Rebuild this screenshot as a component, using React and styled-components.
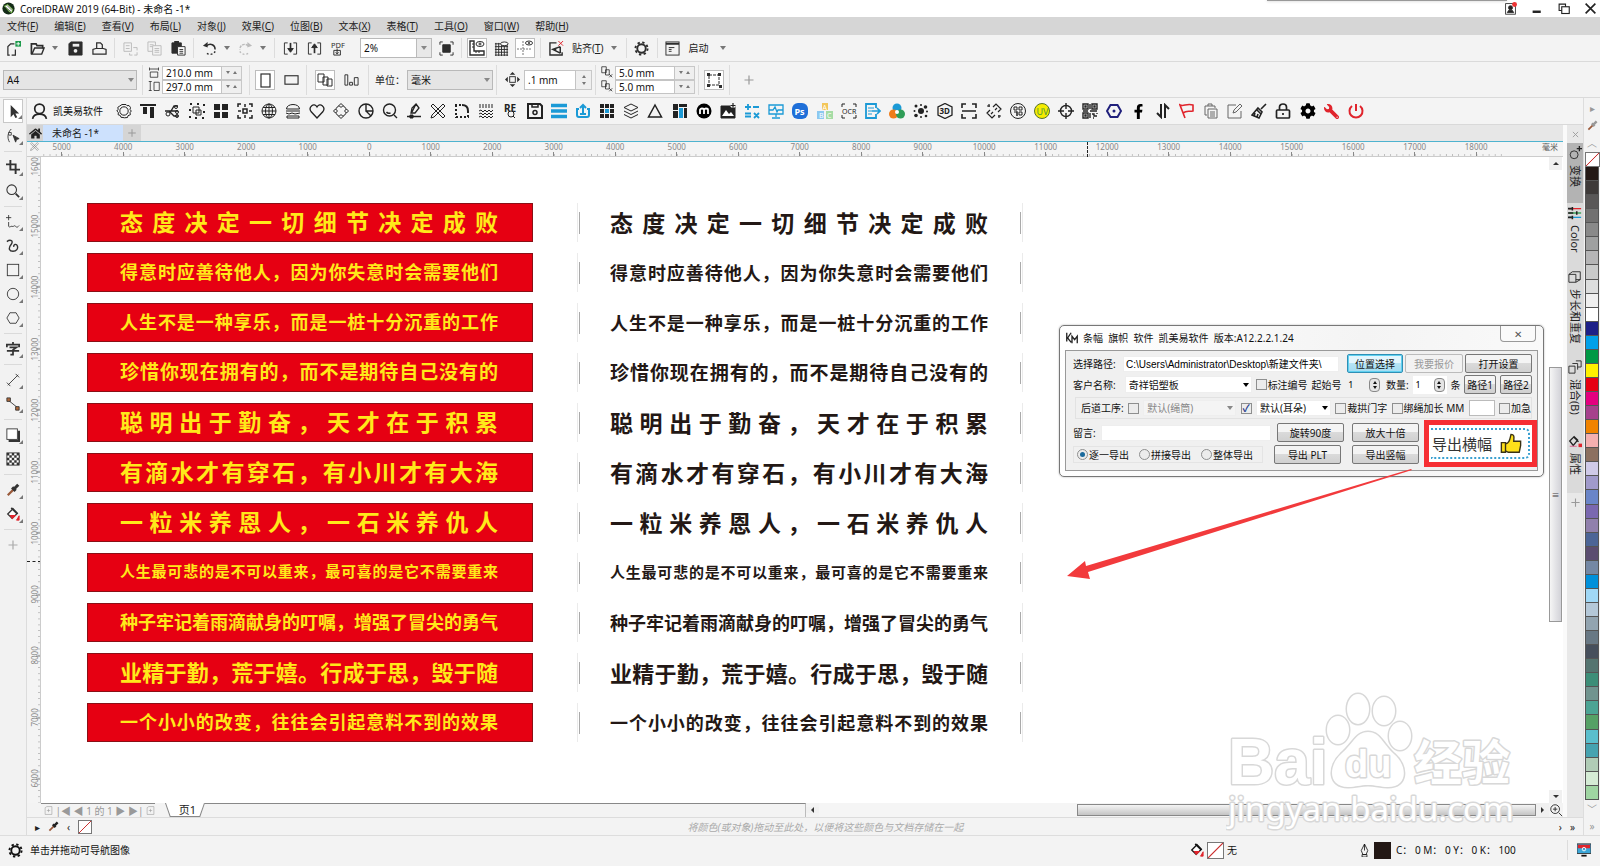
import React, { useState } from 'react';
import styled, { createGlobalStyle, css } from 'styled-components';
import { FaFacebookF, FaWrench, FaCog, FaHome } from 'react-icons/fa';

const GlobalStyle = createGlobalStyle`
  * {
    box-sizing: border-box;
  }

  body {
    margin: 0;
    overflow: hidden;
    background: #f2f2f2;
    color: #222;
  }

  body, button, input, select {
    font-family: "Noto Sans", "Noto Sans CJK SC", sans-serif;
    font-size: 10px;
    line-height: 14px;
  }

  svg {
    display: block;
    flex: none;
  }
`;

const Page = styled.div`
  display: flex;
  flex-direction: column;
  height: 100vh;
`;

/* title and menu */

const TitleBar = styled.header`
  position: relative;
  display: flex;
  align-items: center;
  gap: 5px;
  height: 17px;
  padding: 0 3px 0 2px;
  background: #fff;
`;

const TopEdge = styled.div`
  position: absolute;
  top: 0;
  right: 93px;
  width: 240px;
  height: 1px;
  background: #999;
  box-shadow: 0 0 3px #aaa;
`;

const Title = styled.h1`
  flex: 1;
  margin: 0;
  font-size: 10px;
  font-weight: 400;
  color: #111;
`;

const WindowButtons = styled.div`
  display: flex;
  gap: 14px;
`;

const PlainButton = styled.button`
  display: flex;
  align-items: center;
  justify-content: center;
  padding: 0;
  border: 0;
  background: none;
  color: ${(p) => p.$color || '#222'};
`;

const MenuBar = styled.nav`
  display: flex;
  gap: 16px;
  height: 18px;
  padding: 0 7px;
  background: #d6d6d6;
`;

const ToolRow = styled.div`
  display: flex;
  align-items: center;
  height: ${(p) => p.$height}px;
  padding-left: ${(p) => p.$left || 1}px;
  border-bottom: 1px solid #dadada;
  background: #f3f3f3;
`;

const ToolButton = styled.button`
  display: flex;
  align-items: center;
  justify-content: center;
  width: ${(p) => (p.$active ? 20 : 24)}px;
  height: 20px;
  margin: 0 ${(p) => (p.$active ? 2 : 0)}px;
  padding: 0;
  border: ${(p) => (p.$active ? '1px solid #bdbdbd' : 0)};
  background: ${(p) => (p.$active ? '#fff' : 'none')};
  color: ${(p) => (p.$dim ? '#bbb' : '#2d2d2d')};
`;

const TextButton = styled(PlainButton)`
  padding: 0 4px;
`;

const Sep = styled.span`
  width: 1px;
  height: ${(p) => p.$height || 20}px;
  margin: 0 3px;
  background: #dcdcdc;
`;

const Space = styled.span`
  width: ${(p) => p.$w}px;
`;

const Caret = styled.span`
  width: 0;
  height: 0;
  margin: 0 3px;
  border: 3px solid transparent;
  border-top: 4px solid #777;
  border-bottom: 0;
`;

const SelectWrap = styled.span`
  display: grid;
  align-items: center;
  width: ${(p) => p.$w}px;
  height: ${(p) => p.$h || 20}px;

  select {
    grid-area: 1 / 1;
    width: 100%;
    height: 100%;
    padding: 0 3px;
    border: ${(p) => (p.$flat ? '1px solid #eee' : '1px solid #b9b9b9')};
    border-radius: 0;
    appearance: none;
    background: ${(p) => p.$bg || '#e5e5e5'};
    color: ${(p) => (p.$dim ? '#888' : '#111')};
    opacity: 1;
  }

  ${Caret} {
    grid-area: 1 / 1;
    justify-self: end;
    border-top-color: ${(p) => (p.$flat && !p.$dim ? '#000' : '#888')};
    pointer-events: none;
  }
`;

const BoxedSelect = styled(SelectWrap)`
  select {
    background: linear-gradient(90deg, #fff calc(100% - 15px), #bbb calc(100% - 15px), #bbb calc(100% - 14px), #e8e8e8 calc(100% - 14px));
  }

  ${Caret} {
    margin: 0 5px;
  }
`;

const Pair = styled.div`
  display: grid;
  grid-template-columns: 14px 60px 20px;
  grid-template-rows: 14px 14px;
`;

const SizeInput = styled.input`
  width: 100%;
  min-width: 0;
  height: 14px;
  padding: 0 3px;
  border: 1px solid #c4c4c4;
  background: #fff;
  color: #111;
`;

const NudgeInput = styled(SizeInput)`
  width: 52px;
  height: 20px;
`;

const Stepper = styled.span`
  display: flex;
  flex-direction: ${(p) => (p.$stack ? 'column' : 'row')};
  align-items: center;
  justify-content: space-evenly;
  width: ${(p) => (p.$stack ? 16 : 20)}px;
  height: ${(p) => (p.$stack ? 20 : 14)}px;
  border: 1px solid #c8c8c8;
  border-left: 0;
  background: #efefef;

  i {
    border: 2px solid transparent;
    border-bottom: 3px solid #777;
    border-top: 0;
  }

  i.down {
    border-top: 3px solid #777;
    border-bottom: 0;
  }
`;

/* body */

const Body = styled.div`
  display: flex;
  flex: 1;
  min-height: 0;
`;

const ToolBox = styled.aside`
  display: flex;
  flex-direction: column;
  align-items: center;
  width: 27px;
  padding-top: 1px;
  border-right: 1px solid #dcdcdc;
  background: #f2f2f2;

  hr {
    width: 18px;
    margin: 3px 0;
    border: 0;
    border-top: 1px solid #dadada;
  }
`;

const ToolBoxButton = styled.button`
  position: relative;
  display: flex;
  align-items: center;
  justify-content: center;
  width: 20px;
  height: 24px;
  padding: 0;
  border: 0;
  background: none;
  color: ${(p) => (p.$dim ? '#aaa' : '#333')};

  ${(p) =>
    p.$active &&
    css`
      margin-bottom: 1px;
      border: 1px solid #c8c8c8;
      background: #fff;
    `}

  &::after {
    content: "";
    position: absolute;
    right: 0;
    bottom: 3px;
    border: 2px solid transparent;
    border-right-color: ${(p) => (p.$plain ? 'transparent' : '#777')};
    border-bottom-color: ${(p) => (p.$plain ? 'transparent' : '#777')};
  }
`;

const Main = styled.main`
  display: flex;
  flex: 1;
  flex-direction: column;
  min-width: 0;
`;

const PluginBar = styled.div`
  display: flex;
  align-items: center;
  height: 27px;
  padding-left: 4px;
  border-bottom: 1px solid #d9d9d9;
  background: #f4f4f4;
`;

const PluginName = styled.span`
  width: 59px;
  color: #111;
`;

const PluginIcons = styled.div`
  display: grid;
  flex: 0 1 1256px;
  grid-template-columns: repeat(52, 1fr);
`;

const Work = styled.div`
  display: flex;
  flex: 1;
  min-height: 0;
`;

const DocWindow = styled.section`
  display: flex;
  flex: 1;
  flex-direction: column;
  min-width: 0;
  background: #fff;
`;

const TabStrip = styled.div`
  display: flex;
  height: 17px;
  border-bottom: 1px solid #4fb3cf;
  background: #e7e7e7;
`;

const HomeTab = styled(PlainButton)`
  width: 16px;
  background: #d3d3d3;
`;

const DocTab = styled(PlainButton)`
  justify-content: flex-start;
  width: 80px;
  padding-left: 9px;
  background: #cde1fd;
`;

const NewTab = styled(PlainButton)`
  width: 18px;
  background: #d5d5d5;
  color: #999;
`;

const TopRuler = styled.div`
  position: relative;
  display: flex;
  height: 15px;
  padding-left: 4px;
  border-bottom: 1px solid #ccc;
  background: #f4f4f4;
`;

const rulerText = css`
  font-size: 8px;
  line-height: 10px;
  color: #888;
  text-align: center;
`;

const HCell = styled.span`
  flex: 1;
  ${rulerText}
  background:
    linear-gradient(#888, #888) 50% 100% / 1px 4px no-repeat,
    linear-gradient(90deg, #bbb 1px, transparent 1px) 0 100% / 10% 2px repeat-x;
`;

const Unit = styled.span`
  width: 56px;
  padding-left: 30px;
  ${rulerText}
  color: #555;
`;

const Corner = styled.span`
  position: absolute;
  left: 0;
  top: 0;
  display: flex;
  justify-content: center;
  width: 14px;
  height: 14px;
  background: #f4f4f4;
  color: #777;
`;

const HCursor = styled.i`
  position: absolute;
  left: 1060px;
  top: 0;
  height: 15px;
  border-left: 1px dashed #222;
`;

const View = styled.div`
  position: relative;
  display: flex;
  flex: 1;
  min-height: 0;
`;

const SideRuler = styled.div`
  position: relative;
  width: 14px;
  overflow: hidden;
  border-right: 1px solid #ccc;
  background: #f4f4f4;
`;

const SideScale = styled.div`
  display: grid;
  grid-auto-rows: 1fr;
  height: calc(100% + 31px);
  margin-top: -24px;
`;

const VCell = styled.span`
  writing-mode: vertical-rl;
  transform: rotate(180deg);
  ${rulerText}
  padding-right: 3px;
  background:
    linear-gradient(#888, #888) 0 50% / 4px 1px no-repeat,
    linear-gradient(#bbb 1px, transparent 1px) 0 0 / 2px 10% repeat-y;
`;

const VCursor = styled.i`
  position: absolute;
  left: 0;
  top: 404px;
  width: 14px;
  border-top: 1px dashed #222;
`;

const Canvas = styled.div`
  display: flex;
  flex: 1;
  gap: 44px;
  min-width: 0;
  padding: 46px 0 0 46px;
  overflow: hidden;
`;

const BannerColumn = styled.div`
  display: flex;
  flex: 0 1 445px;
  flex-direction: column;
  gap: 11px;
`;

const Banner = styled.p`
  display: flex;
  align-items: center;
  height: 39px;
  margin: 0;
  padding: 0 34px 4px 32px;
  border: 1px solid #8a1016;
  background: #e60012;
  color: #ffe91a;

  span {
    flex: 1;
    font-family: "Noto Sans CJK SC", sans-serif;
    font-size: ${(p) => p.$size}px;
    font-weight: 700;
    line-height: 30px;
    text-align-last: justify;
    white-space: nowrap;
  }
`;

const PrintLine = styled(Banner)`
  padding-bottom: 2px;
  border: solid #ebebeb;
  border-width: 0 1px;
  background:
    linear-gradient(#aaa, #aaa) 1px 50% / 1px 22px no-repeat,
    linear-gradient(#aaa, #aaa) calc(100% - 1px) 50% / 1px 22px no-repeat;
  color: #231815;
`;

const VScroll = styled.div`
  display: grid;
  grid-template-rows: 13px 197fr 255fr 168fr 13px;
  width: 14px;
  padding-right: 1px;
`;

const ScrollButton = styled(PlainButton)`
  width: 13px;
  background: #f0f0f0;

  &::before {
    content: "";
    border: 3px solid transparent;
    border-${(p) => p.$side}: 3px solid #333;
    border-${(p) => p.$away}: 0;
  }
`;

const VThumb = styled.div`
  display: flex;
  align-items: center;
  justify-content: center;
  border: 1px solid #999;
  background: linear-gradient(90deg, #f5f5f5, #d2d2d8);
  color: #444;
  font-size: 8px;
`;

const PageNav = styled.div`
  display: flex;
  align-items: center;
  height: 14px;
  padding-left: 14px;
  background: #f3f3f3;
  color: #999;
`;

const NavButtons = styled.div`
  display: flex;
  align-items: center;
  justify-content: space-between;
  width: 114px;
  height: 14px;
  padding-left: 3px;
  border-top: 1px solid #888;
`;

const PageTab = styled.button`
  position: relative;
  width: 40px;
  height: 14px;
  margin-left: 10px;
  padding: 0 0 0 5px;
  border: 0;
  background: #888;
  clip-path: polygon(0 0, 100% 0, 88% 100%, 12% 100%);
  color: #222;
  font-size: 11px;
  line-height: 12px;

  &::before {
    content: "";
    position: absolute;
    inset: 0 1px 1px;
    background: #fff;
    clip-path: polygon(0 0, 100% 0, 88% 100%, 12% 100%);
  }

  span {
    position: relative;
  }
`;

const NavFill = styled.div`
  flex: 600;
  align-self: stretch;
  border-top: 1px solid #888;
  border-right: 1px solid #bbb;
`;

const HTrack = styled.div`
  flex: 730;
  display: flex;
  align-self: stretch;
  background: #f5f5f5;
`;

const TrackGap = styled.span`
  flex: 258;
`;

const HThumb = styled.div`
  flex: 457;
  height: 12px;
  margin-top: 1px;
  border: 1px solid #888;
  background: linear-gradient(#f4f4f4, #c4c4c4);
`;

const Docker = styled.aside`
  display: flex;
  flex-direction: column;
  width: 20px;
  border-left: 4px solid #fafafa;
  background: #e8e8e8;
`;

const DockerTab = styled.button`
  display: flex;
  align-items: center;
  gap: 5px;
  height: ${(p) => p.$h}px;
  padding: 3px 0;
  border: 0;
  background: ${(p) => (p.$active ? '#b3b3b3' : '#dadada')};
  color: #222;
  font-size: 11px;
  writing-mode: vertical-rl;
  text-orientation: sideways;
  white-space: nowrap;
`;

const DockerButton = styled(PlainButton)`
  height: 18px;
  color: #999;
`;

const DocPalette = styled.div`
  display: flex;
  align-items: center;
  gap: 8px;
  height: 18px;
  padding: 0 8px;
  border-top: 1px solid #dcdcdc;
  background: #f3f3f3;

  em {
    flex: 1;
    color: #aaa;
    text-align: center;
  }
`;

const Palette = styled.aside`
  display: flex;
  flex-direction: column;
  width: 17px;
  padding: 0 1px;
  border-left: 1px solid #ddd;
  background: #f3f3f3;
`;

const PaletteTools = styled.div`
  display: flex;
  flex-direction: column;
  align-items: center;
  justify-content: space-around;
  height: ${(p) => p.$h}px;
  color: #999;
`;

const Swatch = styled.button`
  flex: 1;
  min-height: 0;
  padding: 0;
  border: 1px solid #555;
  border-top-width: 0;
  background: ${(p) => p.$color};
`;

const NoColor = styled.span`
  display: block;
  flex: none;
  width: ${(p) => p.$size}px;
  height: ${(p) => p.$size}px;
  border: 1px solid #777;
  background: linear-gradient(to bottom right, #fff 46%, #c33 48%, #c33 52%, #fff 54%);
`;

const StatusBar = styled.footer`
  display: flex;
  align-items: center;
  height: 31px;
  padding: 0 9px 2px 8px;
  border-top: 1px solid #ddd;
  background: #f3f3f3;
  color: #111;
`;

const StatusText = styled.span`
  flex: 1;
  padding-left: 7px;
`;

const StatusItem = styled.div`
  display: flex;
  align-items: center;
  gap: 3px;
  width: ${(p) => p.$w}px;
`;

const Ink = styled.span`
  width: 17px;
  height: 17px;
  margin-right: 2px;
  background: #231815;
`;

/* export dialog */

const Dialog = styled.section`
  position: absolute;
  top: 168px;
  right: 19px;
  width: 485px;
  padding: 0 5px 5px;
  border: 1px solid #777;
  border-radius: 5px;
  background: linear-gradient(100deg, #fff, #f4f4f4 60%, #fafafa);
  box-shadow: 0 0 2px #aaa;
  color: #111;

  input, select, button {
    font-size: 10px;
  }
`;

const DialogHead = styled.div`
  display: flex;
  height: 24px;
  gap: 4px;

  h2 {
    flex: 1;
    margin: 0;
    font-size: 10px;
    font-weight: 400;
    line-height: 24px;
    white-space: pre;
  }
`;

const DialogClose = styled.button`
  width: 36px;
  height: 16px;
  margin-right: 2px;
  padding: 0;
  border: 1px solid #999;
  border-top: 0;
  border-radius: 0 0 4px 4px;
  background: #fafafa;
  color: #555;
`;

const DialogBody = styled.div`
  display: flex;
  flex-direction: column;
  padding: 2px 0 3px;
  border: 1px solid #999;
  background: #f0f0f0;
`;

const FormRow = styled.div`
  display: flex;
  align-items: center;
  justify-content: space-between;
  gap: 2px;
  height: 21px;
  padding: 0 5px 0 7px;
  white-space: nowrap;
`;

const FieldLabel = styled.label`
  width: ${(p) => p.$w}px;
`;

const Field = styled.input`
  flex: ${(p) => (p.$w ? 'none' : 1)};
  width: ${(p) => p.$w || 100}px;
  height: 16px;
  padding: 0 2px;
  border: 1px solid ${(p) => (p.$line ? '#bbb' : '#eee')};
  background: #fff;
  font-family: "Liberation Sans", "Noto Sans CJK SC", sans-serif;
`;

const Button = styled.button`
  width: ${(p) => p.$w}px;
  height: 19px;
  padding: 0;
  border: 1px solid #777;
  border-radius: 2px;
  background: linear-gradient(#f4f4f4 45%, #dadada 50%, #d0d0d0);
  color: #111;

  ${(p) =>
    p.$primary &&
    css`
      border-color: #2f8fb5;
      background: linear-gradient(#e2f5fd 45%, #b6e3f5 50%, #a2dcf2);
      box-shadow: inset 0 0 0 1px #5fd0f0;
    `}

  &:disabled {
    border-color: #bbb;
    background: #f2f2f2;
    color: #999;
  }
`;

const ProcessGroup = styled(FormRow)`
  height: 22px;
  margin: 2px 5px 1px 9px;
  padding: 0 0 0 5px;
  border: 1px solid #e2e2e2;
`;

const Check = styled.label`
  display: flex;
  align-items: center;
  gap: 1px;

  input {
    display: grid;
    place-content: center;
    width: 11px;
    height: 11px;
    margin: 0;
    border: 1px solid #8e8f8f;
    border-radius: ${(p) => (p.$round ? '50%' : 0)};
    appearance: none;
    background: #ececec;
  }

  input[type="checkbox"]:checked::before {
    content: "✓";
    color: #223a8c;
    font-size: 10px;
    font-weight: 700;
  }

  input[type="radio"]:checked::before {
    content: "";
    width: 5px;
    height: 5px;
    border-radius: 50%;
    background: #1b6a9c;
  }
`;

const Spin = styled.span`
  display: flex;
  align-items: center;
  width: ${(p) => p.$w}px;
  height: 18px;
  padding-right: 2px;
  background: ${(p) => p.$bg};

  input {
    flex: 1;
    width: 10px;
    padding: 0 0 0 3px;
    border: 0;
    background: none;
    font-size: 9px;
  }

  ${Stepper} {
    width: 11px;
    height: 14px;
    border: 1px solid #888;
    border-radius: 4px;
    background: #e4e4e4;
  }

  i {
    border-bottom-color: #111;
  }

  i.down {
    border-top-color: #111;
  }
`;

const DialogBottom = styled.div`
  display: flex;
`;

const BottomLeft = styled.div`
  display: flex;
  flex: 1;
  flex-direction: column;
  gap: 1px;
  padding-top: 2px;
`;

const RadioBox = styled.div`
  display: flex;
  align-items: center;
  justify-content: space-between;
  width: 190px;
  height: 17px;
  padding: 0 9px 0 3px;
  border: 1px solid #e4e4e4;
`;

const ExportButton = styled.button`
  width: 113px;
  height: 47px;
  padding: 0;
  border: 5px solid #f62e33;
  background: #fff;

  && {
    font-size: 15px;
  }

  span {
    display: flex;
    align-items: center;
    justify-content: space-between;
    height: 31px;
    margin: 2px;
    padding: 0 6px 0 1px;
    border: 2px dotted #3aa0d0;
    border-left: 0;
    border-radius: 0 5px 5px 0;
    white-space: nowrap;
    color: #333;
  }
`;

const Arrow = styled.svg`
  position: absolute;
  top: 308px;
  right: 150px;
`;

const Watermark = styled.svg`
  position: absolute;
  right: 42px;
  bottom: -35px;
  z-index: 1;
  pointer-events: none;
`;

/* icons, all on a 16 x 16 grid */

const BLUE = '#1b9ad6';
const RED = '#e0242c';

const shapes = {
  logo: <><circle cx="8" cy="8" r="7.5" fill="#142c18" stroke="none" /><path d="M3 5l4-2 6 6-1 4-3-1z" fill="#fff" stroke="#66b52c" /><path d="M4 6l7 6M6 4l6 6" stroke="#142c18" strokeWidth=".8" /></>,
  user: <><rect x="2" y="2" width="12" height="13" /><circle cx="8" cy="7" r="2.5" fill="currentColor" /><path d="M4 13h8l-2-3H6z" fill="currentColor" /><circle cx="13" cy="3" r="3" fill="#e33" stroke="none" /></>,
  min: <path d="M2 12h10" strokeWidth="3" />,
  restore: <><rect x="5" y="5" width="10" height="9" strokeWidth="1.5" /><path d="M5 10H1.500V1.500H10V5" strokeWidth="1.500" /></>,
  close: <path d="M2 2l12 12M14 2L2 14" strokeWidth="2" />,
  newDoc: <><path d="M9 3H5L2 6v9h2M6 15h4V9" strokeWidth="1.300" /><rect x="10" y="0" width="6" height="6" fill="#1b9a4a" stroke="none" /><path d="M13 1v4M11 3h4" stroke="#fff" /></>,
  open: <><path d="M1.500 14V3h5l1 2h6v3" strokeWidth="1.800" /><path d="M2 14L5 7.500h10L12.500 14z" strokeWidth="1.500" /></>,
  save: <><path d="M3 1h12v14H1V3z" fill="currentColor" /><path d="M5 3h7v3H5z" fill="#eee" stroke="none" /><circle cx="8" cy="10.500" r="2" fill="#eee" stroke="none" /></>,
  print: <><path d="M1 14V9l3-1h8l3 1v5zM5 8V2h4l2 2v4" strokeWidth="1.300" /></>,
  cut: <><path d="M1 2h8v9H1zM3 5h4M3 8h4" /><path d="M11 7h4v3M15 12v3h-3M10 15H7v-2" /></>,
  copy: <><path d="M1 1h8v10H1zM3 4h4M3 6h3" /><path d="M6 5h9v10H6z" fill="#f3f3f3" /><path d="M8 8h5M8 10h5M8 12h5" /></>,
  paste: <><path d="M1 2h10v11H1z" fill="currentColor" /><path d="M4 0h4v3H4z" fill="currentColor" /><path d="M7 6h8v9H7z" fill="#fff" /><path d="M9 9h4M9 11h4M9 13h4" /></>,
  undo: <><path d="M5 5c4-3 9-1 9 4" strokeWidth="1.500" /><path d="M14 11a6 6 0 0 1-10 1" strokeWidth="1.500" strokeDasharray="2 2" /><path d="M1 5l5-4v6z" fill="currentColor" stroke="none" /></>,
  redo: <><path d="M11 5C7 2 2 4 2 9" strokeWidth="1.500" strokeDasharray="3 1" /><path d="M2 11a6 6 0 0 0 10 1" strokeWidth="1.500" strokeDasharray="2 2" /><path d="M15 5l-5-4v6z" fill="currentColor" stroke="none" /></>,
  import: <><path d="M5 2H1.500v12H5M11 2h3.500v12H11" /><path d="M8 2v8" strokeWidth="1.800" /><path d="M5 8h6l-3 4z" fill="currentColor" /></>,
  export: <><path d="M5 2H1.500v12H5M11 2h3.500v12H11" /><path d="M8 13V6" strokeWidth="1.800" /><path d="M5 7h6L8 3z" fill="currentColor" /></>,
  pdf: <><text x="0" y="7" fontSize="8" fill="currentColor" stroke="none">PDF</text><path d="M3 10h7v5H3zM6.500 8v5M5 12l1.500 2L8 12" /></>,
  full: <><path d="M4 4h8v8H4z" fill="currentColor" /><path d="M1 4V1h3M12 1h3v3M15 12v3h-3M4 15H1v-3" /></>,
  rulers: <><path d="M1 1h4v10h10v4H1z" strokeWidth="1.400" /><path d="M3 4h2M3 7h2M7 13v-2M10 13v-2" /><ellipse cx="11" cy="4" rx="4" ry="2.500" /><circle cx="11" cy="4" r="1" /></>,
  grid: <><path d="M1 3h14M1 6h14M1 9h14M1 12h14M1 15h14M2 2v14M5 2v14M8 2v14M11 2v14M14 2v14" /><ellipse cx="11" cy="3" rx="4" ry="2" fill="#fff" /></>,
  guides: <><path d="M6 1v14M0 9h15" strokeDasharray="2 1" stroke="#777" /><ellipse cx="12" cy="3" rx="3.500" ry="2" /><circle cx="12" cy="3" r=".7" /></>,
  snap: <><path d="M8 2H1v13h13v-3" strokeWidth="1.500" /><path d="M12 6L4 9l8 4M7 8v3M12 6v7" strokeWidth="1.600" /><path d="M10 0l5 5M15 0l-5 5" stroke={RED} /></>,
  gear: <><circle cx="8" cy="8" r="4.500" strokeWidth="2" /><circle cx="8" cy="8" r="6.500" strokeWidth="2" strokeDasharray="2.500 2.600" /></>,
  launch: <><rect x="1" y="1" width="14" height="14" /><path d="M1 3h14" strokeWidth="2" /><path d="M4 7h6M4 9h3M4 11h3" /></>,
  portrait: <rect x="4" y="2" width="9" height="13" strokeWidth="1.200" />,
  landscape: <rect x="1" y="4" width="14" height="9" strokeWidth="1.200" />,
  pages: <><path d="M1 2h6v8H1zM6 5h5v8H6zM10 7h5v7h-5z" fill="#fff" /></>,
  bars: <path d="M1 3h3v11H1zM6 11h3v3H6zM11 6h4v8h-4z" />,
  nudge: <><rect x="5" y="5" width="6" height="6" /><path d="M8 0l3 3H5zM8 16l3-3H5zM0 8l3-3v6zM16 8l-3-3v6z" fill="currentColor" stroke="none" /></>,
  dup: <><path d="M1 1h6v8H1zM6 5h5v7H6z" /><path d="M11 11l4 4M15 11l-4 4" /></>,
  treat: <><rect x="3" y="3" width="10" height="10" strokeDasharray="3 1" /><path d="M1 1h3v3H1zM12 1h3v3h-3zM1 12h3v3H1zM13 13h3v3h-3z" fill="currentColor" stroke="none" /></>,
  width: <path d="M2 2v4M14 2v4M2 4h12M3 8h10v7H3z" />,
  height: <path d="M1 2h4M1 14h4M3 2v12M8 3h7v11H8z" />,
  plus: <path d="M8 2v12M2 8h12" strokeWidth="1.600" />,
  pick: <path d="M5 1v13l3-3 2 4 2-1-2-4h4z" fill="currentColor" stroke="none" />,
  shapeTool: <><path d="M6 0C2 4 1 10 4 15" /><path d="M3 4h3v3H3z" fill="#fff" /><path d="M8 7l7 4-3 1-1 3z" fill="currentColor" /></>,
  crop: <path d="M5 0v11h11M0 5h11v11" strokeWidth="2.200" />,
  zoom: <><circle cx="6.500" cy="6.500" r="5.500" strokeWidth="1.200" /><path d="M11 11l4 4" strokeWidth="2" /></>,
  freehand: <><path d="M3 0v6M0 3h6M3 8v5c2 2 2-1 4 0s2-2 4 0 3 0 4-1" /></>,
  artistic: <path d="M1 3c4-3 8-1 5 3-4 5-2 8 2 8s6-3 5-6-5-2-4 1" strokeWidth="1.600" />,
  rect: <rect x="1.500" y="1.500" width="13" height="13" />,
  ellipse: <circle cx="8" cy="8" r="6.500" />,
  polygon: <path d="M4.500 2h7L15 8l-3.500 6h-7L1 8z" />,
  text: <path d="M8 0v3M1 6V3h14v3M4 6h8L8 9v5.500H5M1 10h14" strokeWidth="2" />,
  dimension: <path d="M2 14L14 2M1 11l4 4M11 1l4 4" />,
  connector: <><path d="M3 4l10 8" /><path d="M1 1h4v4H1zM11 11h4v4h-4z" fill="#b06a3c" /></>,
  shadow: <><path d="M3 15h12V3" strokeWidth="3" /><rect x="1" y="1" width="12" height="12" fill="#fff" /></>,
  checker: <><rect x="1" y="1" width="14" height="14" fill="#fff" /><path d="M1 2.500h14M1 8h14M1 13.500h14" strokeDasharray="2.800 2.800" strokeWidth="2.800" /><path d="M3.800 5.200h12M3.800 10.800h12" strokeDasharray="2.800 2.800" strokeWidth="2.800" /></>,
  dropper: <><path d="M2 14l7-7" stroke="#9a5a3a" strokeWidth="2.500" /><path d="M7 5l4 4M10 6l4-4" strokeWidth="3.500" /></>,
  fill: <><path d="M2 8l6-6 5 5-6 6z" fill="#fff" strokeWidth="1.500" /><path d="M4 9h8l-5 5z" fill={RED} stroke="none" /><path d="M15 10v5h-3z" fill={RED} stroke={RED} /><path d="M6 1l7 7" strokeWidth="2" /></>,
  account: <><circle cx="8" cy="5.500" r="4.500" strokeWidth="1.600" /><path d="M1.500 15c1-6 12-6 13 0" strokeWidth="1.600" /></>,
  flower: <><circle cx="8" cy="8" r="4.200" /><path d="M6 1.500h4l1 1.200 2-.2 1.500 2-.5 2 1.300 1.500-1.300 1.700.4 2-2.400 1-.5 1.800-3 .3L7 14.500l-2-.2-.7-1.800-2.200-.8.3-2.200L.800 8l1.400-1.700-.4-2 2-1.300z" /></>,
  align: <><path d="M0 2h16" strokeWidth="2" /><path d="M3 4h4v7H3zM10 4h4v11h-4z" fill="currentColor" stroke="none" /></>,
  nodes: <><path d="M1 8h6l3-5h4M5 8l5 5h4M7 8h7" strokeWidth="1.300" /><circle cx="4" cy="11" r="2" /><circle cx="12" cy="4" r="1.500" /><circle cx="13" cy="9" r="1.500" /><circle cx="13" cy="13" r="1.500" /></>,
  group: <><path d="M1 1h14v14H1z" strokeDasharray="2 5" strokeWidth="2" /><path d="M4 4h6v6H4zM7 7h5v5H7z" /></>,
  four: <path d="M1 1h6v6H1zM9 1h6v6H9zM1 9h6v6H1zM9 9h6v6H9z" fill="currentColor" stroke="none" />,
  focus: <><path d="M1 4V1h3M12 1h3v3M15 12v3h-3M4 15H1v-3M8 1v3M8 12v3M1 8h3M12 8h3" strokeWidth="1.500" /><rect x="6" y="6" width="4" height="4" strokeWidth="1.500" /></>,
  globe: <><circle cx="8" cy="8" r="7" /><ellipse cx="8" cy="8" rx="3.500" ry="7" /><path d="M8 1v14M1 8h14M2 4.500h12M2 11.500h12" /></>,
  burger: <><path d="M1.500 6c0-6 13-6 13 0zM1 8h14M1 10l3 1 3-1 3 1 5-1M2 13h12v2H2z" /></>,
  heart: <path d="M8 15L2 8.500C-1 4 5-1 8 4c3-5 9 0 6 4.500z" strokeWidth="1.300" />,
  ring: <><circle cx="8" cy="8" r="5.500" /><path d="M8 .5L10 2.500 8 4.500 6 2.500zM8 11.500l2 2-2 2-2-2zM2.500 6l2 2-2 2-2-2zM13.500 6l2 2-2 2-2-2z" fill="#f4f4f4" /></>,
  pie: <><circle cx="8" cy="8" r="7" strokeWidth="1.400" /><path d="M8 1v7h7M8 8l5 5" strokeWidth="1.400" /></>,
  search: <><circle cx="7.500" cy="7" r="6" strokeWidth="1.400" /><path d="M12 12l3 3M4.500 9c1 1.500 2.500 1.500 4 1" strokeWidth="1.400" /></>,
  pen: <><path d="M10 1l3 4-4 5H5l1-5zM10 1L6 9M1 13.500h14" strokeWidth="1.300" /><path d="M4 12h3v3H4z" fill="currentColor" /></>,
  tools: <path d="M3 1l12 12-2 2L1 3zM13 1l2 2L4 14l-3 1 1-3z" />,
  corner: <><path d="M1 2h8" strokeDasharray="2 2" strokeWidth="2" /><path d="M2 2v13M2 14h13M14 8v6" strokeDasharray="2 2" strokeWidth="2" /><path d="M8 2c4 0 6 2 6 6" strokeWidth="2" /></>,
  waves: <path d="M2 1v4M5 1v4M8 1v4M11 1v4M14 1v4M1 8l2-1 2 2 2-2 2 2 2-2 2 2 2-2M1 11l2-1 2 2 2-2 2 2 2-2 2 2 2-2M1 14l2-1 2 2 2-2 2 2 2-2 2 2 2-2" />,
  re: <><text x="1" y="9" fontSize="10" fontWeight="700" fill="currentColor" stroke="none">RE</text><circle cx="8" cy="11" r="3" fill="#f4f4f4" /><path d="M10 13l2 2" /></>,
  disk: <><path d="M1 1h12l2 2v12H1z" strokeWidth="2" /><path d="M5 1v3h6V1" strokeWidth="1.500" /><circle cx="8" cy="9.500" r="2" strokeWidth="1.500" /></>,
  lines: <path d="M0 2.500h16M0 8h16M0 13.500h16" stroke={BLUE} strokeWidth="3.500" />,
  upload: <path d="M4 6H2v6c0 1 1 2 2 2h8c1 0 2-1 2-2V6h-2M8 10V3M5 5l3-3 3 3M5 11h6" stroke={BLUE} strokeWidth="2" />,
  nine: <><path d="M1 1h4v4H1zM6 1h4v4H6zM11 1h4v4h-4zM1 6h4v4H1zM11 6h4v4h-4zM1 11h4v4H1zM11 11h4v4h-4zM6 11h4v4H6z" fill="currentColor" stroke="none" /><path d="M6 6h4v4H6z" fill={BLUE} stroke="none" /></>,
  layers: <path d="M8 1l7 3.500L8 8 1 4.500zM1 8l7 3.500L15 8M1 11.500L8 15l7-3.500" />,
  triangle: <path d="M8 2l6.500 12h-13z" strokeWidth="1.500" />,
  layout: <><path d="M1 1h5v6H1zM7 1h8v3H7zM1 8h5v7H1zM12 5h3v10h-3z" fill="currentColor" stroke="none" /><path d="M7 5h4v10H7z" fill={BLUE} stroke="none" /></>,
  m: <><circle cx="8" cy="8" r="7.500" fill="#000" stroke="none" /><path d="M4 11V7c0-2 4-2 4 0v4M8 7c0-2 4-2 4 0v4" stroke="#fff" strokeWidth="1.800" /></>,
  image: <><path d="M1 3h14v12H1z" fill="currentColor" /><path d="M2 13l4-6 3 4 2-2 3 4z" fill="#fff" stroke="none" /><path d="M13 0v5M10.500 2.500h5" stroke="#f4f4f4" strokeWidth="3" /><path d="M13 0v5M10.500 2.500h5" strokeWidth="1.200" /></>,
  calc: <path d="M1 4h6M4 1v6M9 4h6M1 10.500h6M1 13.500h6M10 10l5 5M15 10l-5 5" stroke={BLUE} strokeWidth="1.800" />,
  monitor: <path d="M1 2h14v9H1zM8 11v3M4 15h8M1 7h4l2-3 2 5 1-2h5" stroke={BLUE} strokeWidth="1.300" />,
  ps: <><rect x="0" y="0" width="16" height="16" rx="6" fill="#1f6fd8" stroke="none" /><text x="2.500" y="11.500" fontSize="9" fontWeight="700" fill="#fff" stroke="none">Ps</text></>,
  abc: <><path d="M5 0h6v7H5z" fill="#f3c65a" stroke="none" /><path d="M0 8h7v8H0z" fill="#8cc8f0" stroke="none" /><path d="M9 8h7v8H9z" fill="#a5dca5" stroke="none" /><text x="2" y="14.500" fontSize="7" fill="#fff" stroke="none">B</text><text x="10" y="14.500" fontSize="7" fill="#fff" stroke="none">C</text><text x="5.500" y="6.500" fontSize="7" fill="#fff" stroke="none">A</text></>,
  ocr: <><path d="M1 4V1h3M12 1h3v3M15 12v3h-3M4 15H1v-3" /><text x="1" y="11" fontSize="7" fill="currentColor" stroke="none">OCR</text></>,
  exportBlue: <><path d="M11 5V1H1v14h10v-4" stroke={BLUE} strokeWidth="1.800" /><path d="M3 5h6M3 8h4M3 11h4" stroke={BLUE} /><path d="M7 8h8M12 5l3 3-3 3" stroke={BLUE} strokeWidth="1.600" /></>,
  colors: <><circle cx="8" cy="5" r="4.500" fill={BLUE} stroke="none" /><circle cx="4.500" cy="11" r="4.500" fill="#ef7d1a" stroke="none" /><circle cx="11.500" cy="11" r="4.500" fill="#2f9d57" stroke="none" /><circle cx="8" cy="9" r="2" fill="#fff" stroke="none" /></>,
  splat: <><g fill="currentColor" stroke="none"><circle cx="8" cy="8" r="3" /><circle cx="3" cy="3" r="1.500" /><circle cx="12.500" cy="4" r="1.800" /><circle cx="3" cy="12.500" r="1.800" /><circle cx="13" cy="13" r="1.300" /><circle cx="8" cy="2" r="1" /><circle cx="8" cy="14" r="1" /><circle cx="1.500" cy="8" r="1" /><circle cx="14" cy="8.500" r="1" /></g></>,
  cube: <><path d="M8 .5l7 3.500v8l-7 3.500L1 12V4z" strokeWidth="1.300" /><text x="2.500" y="10.500" fontSize="8" fontWeight="700" fill="currentColor" stroke="none">3D</text></>,
  scan: <path d="M1 5V1h4M11 1h4v4M15 11v4h-4M5 15H1v-4M1 8h14" strokeWidth="1.600" />,
  unlink: <path d="M7 4l3-3 5 5-3 3M9 12l-3 3-5-5 3-3M5 11l2-2M9 7l2-2M3 1v3M1 3h3M13 15v-3M15 13h-3" strokeWidth="1.200" />,
  seal: <><circle cx="8" cy="8" r="7.500" /><path d="M4 4h3v3H4zM9 4h3v3H9zM4 9h3v4M9 9h3v3H9zM7 8v5" /></>,
  uv: <><circle cx="8" cy="8" r="7.500" fill="#f5ec00" stroke="#55702c" /><text x="2.500" y="11.500" fontSize="9" fill="#4f9a3c" stroke="none">UV</text></>,
  target: <><circle cx="8" cy="8" r="5.500" strokeWidth="1.400" /><path d="M8 0v6M8 10v6M0 8h6M10 8h6" strokeWidth="1.400" /></>,
  qr: <path d="M1 1h5v5H1zM10 1h5v5h-5zM1 10h5v5H1zM3 3h1v1H3zM12 3h1v1h-1zM3 12h1v1H3zM8 1v5M8 8h7M1 8h5M8 10v5M10 11h2v2h3M11 15h1M15 10v1" strokeWidth="1.400" />,
  hex: <><path d="M4.500 2h7L15 8l-3.500 6h-7L1 8z" stroke="#20207c" strokeWidth="2" /><circle cx="8" cy="8" r="1.500" fill="#20207c" stroke="none" /></>,
  arrows: <path d="M6 1v13L2 10M10 15V2l4 4" strokeWidth="2" />,
  flag: <path d="M6 15L1 2c4 2 6-2 13 0v6c-4 1-6-1-10 2" stroke={RED} strokeWidth="1.600" />,
  clip: <path d="M4 12H2V3h10v2M5 3V1h4v2M5 6h9v9H5zM7 9h5M7 11h5M7 13h5" stroke="#666" />,
  edit: <path d="M9 2H1v13h13V8M6 10l1-3 6-6 2 2-6 6z" stroke="#666" />,
  broom: <path d="M15 1l-5 5M7 5l4 4-3 6-7-3zM4 10l-1 3M7 11l-1 3M6 7l4 4" strokeWidth="1.600" />,
  lock: <><rect x="1.500" y="7" width="13" height="8" rx="1" strokeWidth="1.700" /><path d="M4.500 7V4c0-4 7-4 7 0v3M8 10v2" strokeWidth="1.700" /></>,
  power: <path d="M8 1v7M4 3a6.500 6.500 0 1 0 8 0" stroke={RED} strokeWidth="2" />,
  page: <path d="M2 3l3-2h9v14H2zM8 5v6M5 8h6" />,
  transform: <><circle cx="7" cy="10" r="4.500" /><path d="M13 0v6M10 3h6" strokeWidth="1.500" /></>,
  sliders: <><path d="M1 3h14" stroke={RED} strokeWidth="1.500" /><path d="M1 8h14" stroke="#2a9d4a" strokeWidth="1.500" /><path d="M1 13h14" stroke={BLUE} strokeWidth="1.500" /><path d="M5 1v4M10 6v4M5 11v4M0 3h4M0 8h6M0 13h4" strokeWidth="1.800" /></>,
  step: <path d="M1 5h8v9H1zM5 2h9v9H9M1 5l4-3M9 14l5-3" />,
  blend: <path d="M1 7h7v8H1zM5 4h6v7M9 1h6v7h-4" />,
  props: <><path d="M2 8l5-5 4 4-5 6zM6 3l6 6" strokeWidth="1.500" /><path d="M12 11h4v4h-4z" fill={RED} stroke="none" /><path d="M2 14h8" stroke="#d58" /></>,
  nib: <path d="M8 0l4 8-2 5H6L4 8zM8 0v8M5 13h6v3H5z" />,
  screen: <><rect x="0" y="1" width="16" height="11" fill="#3ba6d8" stroke="#333" /><path d="M1 2h14v4H1z" fill={RED} stroke="none" /><circle cx="8" cy="7" r="2" stroke="#fff" /><path d="M5 14.500h6" strokeWidth="2" /></>,
  zoomFit: <><circle cx="7" cy="7" r="5" /><path d="M11 11l4 4M4.500 7h5M7 4.500v5" /></>,
  km: <path d="M2 2v10M7 2L3 8l4 5M8 14V6l3 4 3-4v8" strokeWidth="1.500" />,
  thumb: <path d="M1 7h3v7H1zM4 8c3-1 3-3 4-7 3 0 2 3 2 5h5v3l-1 5H6l-2-1z" fill="#ffe11a" stroke="#3a3214" />,
};

const Icon = ({ name, size = 16 }) => (
  <svg width={size} height={size} viewBox="0 0 16 16" fill="none" stroke="currentColor" aria-hidden="true">
    {shapes[name]}
  </svg>
);

const menus = [
  ['文件', 'F'], ['编辑', 'E'], ['查看', 'V'], ['布局', 'L'], ['对象', 'J'], ['效果', 'C'],
  ['位图', 'B'], ['文本', 'X'], ['表格', 'T'], ['工具', 'O'], ['窗口', 'W'], ['帮助', 'H'],
];

const plugins = [
  'flower', 'align', 'nodes', 'group', 'four', 'focus', 'globe', 'burger', 'heart', 'ring', 'pie', 'search',
  'pen', 'tools', 'corner', 'waves', 're', 'disk', 'lines', 'upload', 'nine', 'layers', 'triangle', 'layout',
  'm', 'image', 'calc', 'monitor', 'ps', 'abc', 'ocr', 'exportBlue', 'colors', 'splat', 'cube', 'scan',
  'unlink', 'seal', 'uv', 'target', 'qr', 'hex', 'facebook', 'arrows', 'flag', 'clip', 'edit', 'broom',
  'lock', 'cog', 'wrench', 'power',
];

const packIcons = {
  facebook: <FaFacebookF size={15} color="#000" />,
  cog: <FaCog size={16} color="#000" />,
  wrench: <FaWrench size={15} color={RED} style={{ transform: 'scaleX(-1)' }} />,
};

const tools = [
  ['shapeTool'], ['crop', 'zoom'], ['freehand', 'artistic', 'rect', 'ellipse', 'polygon'], ['text'],
  ['dimension', 'connector'], ['shadow', 'checker'], ['dropper', 'fill'],
];

const banners = [
  { text: '态度决定一切细节决定成败', size: 23 },
  { text: '得意时应善待他人，因为你失意时会需要他们', size: 18 },
  { text: '人生不是一种享乐，而是一桩十分沉重的工作', size: 18 },
  { text: '珍惜你现在拥有的，而不是期待自己没有的', size: 19 },
  { text: '聪明出于勤奋，天才在于积累', size: 23 },
  { text: '有滴水才有穿石，有小川才有大海', size: 23 },
  { text: '一粒米养恩人，一石米养仇人', size: 23 },
  { text: '人生最可悲的是不可以重来，最可喜的是它不需要重来', size: 15 },
  { text: '种子牢记着雨滴献身的叮嘱，增强了冒尖的勇气', size: 18 },
  { text: '业精于勤，荒于嬉。行成于思，毁于随', size: 22 },
  { text: '一个小小的改变，往往会引起意料不到的效果', size: 18 },
];

const colors = [
  '#231815', '#3e3a39', '#595757', '#727171', '#898989', '#9fa0a0', '#b5b5b6', '#c9caca', '#dcdddd',
  '#efefef', '#ffffff', '#1d2088', '#00a0e9', '#009944', '#fff100', '#e60012', '#e4007f', '#a6418c',
  '#f08300', '#f4b0b0', '#8c7060', '#cfcae8', '#a09acb', '#6a85c8', '#7a68b0', '#9080ac', '#4c6596',
  '#5b4d70', '#7488a4', '#0090da', '#a0d8f6', '#b4c8d8', '#92a4b0', '#687884', '#464f5c', '#547470',
  '#3d8e78', '#71948f', '#4ca494', '#56a166', '#5bbfcd', '#46a3b0', '#b0ccb6', '#d5ecd5', '#9fd5a2',
];

const hMarks = Array.from({ length: 24 }, (_, i) => Math.abs(i - 5) * 1000);
const vMarks = Array.from({ length: 11 }, (_, i) => (16 - i) * 1000);

const Dropdown = ({ label, value, as: Wrap = SelectWrap, ...rest }) => (
  <Wrap {...rest}>
    <select aria-label={label} defaultValue={value} disabled={rest.$dim}>
      <option>{value}</option>
    </select>
    <Caret />
  </Wrap>
);

const Arrows = ({ $stack }) => (
  <Stepper $stack={$stack}>
    {$stack ? <><i /><i className="down" /></> : <><i className="down" /><i /></>}
  </Stepper>
);

const SizePair = ({ icons, values, labels }) => (
  <Pair>
    {values.map((value, i) => (
      <React.Fragment key={labels[i]}>
        <Icon name={icons[i]} size={12} />
        <SizeInput aria-label={labels[i]} defaultValue={value} />
        <Arrows />
      </React.Fragment>
    ))}
  </Pair>
);

const Tool = ({ name, ...rest }) => (
  <ToolButton aria-label={name} {...rest}>
    <Icon name={name} size={rest.$active ? 16 : 15} />
  </ToolButton>
);

const StandardBar = () => (
  <ToolRow $height={27}>
    <Tool name="newDoc" />
    <Tool name="open" />
    <Caret />
    <Space $w={2} />
    <Tool name="save" />
    <Tool name="print" />
    <Sep />
    <Tool name="cut" $dim />
    <Tool name="copy" $dim />
    <Tool name="paste" />
    <Sep />
    <Tool name="undo" />
    <Caret />
    <Tool name="redo" $dim />
    <Caret />
    <Space $w={2} />
    <Sep />
    <Tool name="import" />
    <Tool name="export" />
    <Tool name="pdf" />
    <Space $w={10} />
    <Dropdown as={BoxedSelect} label="缩放" value="2%" $w={72} />
    <Space $w={2} />
    <Tool name="full" />
    <Sep />
    <Tool name="rulers" $active />
    <Tool name="grid" />
    <Tool name="guides" $active />
    <Sep />
    <Tool name="snap" />
    <TextButton>贴齐(<u>T</u>)</TextButton>
    <Caret />
    <Space $w={3} />
    <Sep />
    <Tool name="gear" />
    <Sep />
    <Tool name="launch" />
    <TextButton>启动</TextButton>
    <Space $w={4} />
    <Caret />
  </ToolRow>
);

const PropertyBar = () => (
  <ToolRow $height={36} $left={3}>
    <Dropdown label="页面大小" value="A4" $w={134} />
    <Space $w={2} />
    <Sep $height={30} />
    <Space $w={2} />
    <SizePair icons={['width', 'height']} values={['210.0 mm', '297.0 mm']} labels={['页面宽度', '页面高度']} />
    <Space $w={4} />
    <Sep $height={30} />
    <Tool name="portrait" $active />
    <Space $w={2} />
    <Tool name="landscape" />
    <Sep $height={30} />
    <Space $w={3} />
    <Tool name="pages" $active />
    <Space $w={2} />
    <Tool name="bars" />
    <Space $w={2} />
    <Sep $height={30} />
    <Space $w={3} />
    <FieldLabel as="span" $w={32}>单位：</FieldLabel>
    <Dropdown label="单位" value="毫米" $w={86} />
    <Sep $height={30} />
    <Tool name="nudge" />
    <NudgeInput aria-label="微调距离" defaultValue=".1 mm" />
    <Arrows $stack />
    <Sep $height={30} />
    <Space $w={2} />
    <SizePair icons={['dup', 'dup']} values={['5.0 mm', '5.0 mm']} labels={['再制 X', '再制 Y']} />
    <Sep $height={30} />
    <Tool name="treat" $active />
    <Sep $height={30} />
    <Space $w={10} />
    <PlainButton aria-label="自定义" $color="#999"><Icon name="plus" size={12} /></PlainButton>
  </ToolRow>
);

const CheckItem = ({ text, name, ...rest }) => (
  <Check>
    <input type="checkbox" aria-label={text || name} {...rest} />
    {text}
  </Check>
);

const ExportDialog = () => {
  const [mode, setMode] = useState('逐一导出');

  return (
    <Dialog>
      <DialogHead>
        <PlainButton as="span"><Icon name="km" size={14} /></PlainButton>
        <h2>条幅  旗帜  软件  凯美易软件  版本:A12.2.2.1.24</h2>
        <DialogClose aria-label="关闭">✕</DialogClose>
      </DialogHead>
      <DialogBody>
        <FormRow>
          <FieldLabel $w={48} htmlFor="path">选择路径:</FieldLabel>
          <Field id="path" defaultValue={'C:\\Users\\Administrator\\Desktop\\新建文件夹\\'} />
          <Space $w={4} />
          <Button $w={56} $primary>位置选择</Button>
          <Button $w={58} disabled>我要报价</Button>
          <Button $w={67}>打开设置</Button>
        </FormRow>
        <FormRow>
          <FieldLabel as="span" $w={48}>客户名称:</FieldLabel>
          <Dropdown label="客户名称" value="奇祥铝塑板" $w={127} $h={17} $flat $bg="#fff" />
          <CheckItem text="标注编号" />
          <label htmlFor="start">起始号</label>
          <Spin $w={37} $bg="#f0f0f0"><input id="start" defaultValue="1" /><Arrows $stack /></Spin>
          <label htmlFor="count">数量:</label>
          <Spin $w={34} $bg="#fff"><input id="count" defaultValue="1" /><Arrows $stack /></Spin>
          <span>条</span>
          <Button $w={32}>路径1</Button>
          <Button $w={32}>路径2</Button>
        </FormRow>
        <ProcessGroup>
          <span>后道工序:</span>
          <CheckItem name="绳筒" />
          <Dropdown label="绳筒" value="默认(绳筒)" $w={93} $h={16} $flat $dim $bg="#f4f4f4" />
          <CheckItem name="耳朵" defaultChecked />
          <Dropdown label="耳朵" value="默认(耳朵)" $w={75} $h={16} $flat $bg="#fff" />
          <CheckItem text="裁拱门字" />
          <CheckItem text="绑绳加长 MM" />
          <Field $w={26} $line aria-label="加长" />
          <CheckItem text="加急" />
        </ProcessGroup>
        <DialogBottom>
          <BottomLeft>
            <FormRow>
              <FieldLabel $w={26} htmlFor="note">留言:</FieldLabel>
              <Field id="note" />
              <Space $w={2} />
              <Button $w={67}>旋转90度</Button>
              <Space $w={4} />
              <Button $w={67}>放大十倍</Button>
            </FormRow>
            <FormRow>
              <RadioBox>
                {['逐一导出', '拼接导出', '整体导出'].map((item) => (
                  <Check key={item} $round>
                    <input type="radio" name="mode" checked={mode === item} onChange={() => setMode(item)} />
                    {item}
                  </Check>
                ))}
              </RadioBox>
              <Space $w={4} />
              <Button $w={67}>导出 PLT</Button>
              <Space $w={4} />
              <Button $w={67}>导出竖幅</Button>
            </FormRow>
          </BottomLeft>
          <ExportButton>
            <span>导出横幅 <Icon name="thumb" size={22} /></span>
          </ExportButton>
        </DialogBottom>
      </DialogBody>
    </Dialog>
  );
};

const BaiduMark = () => (
  <Watermark width="295" height="148" viewBox="0 0 295 148">
    <g
      fill="#fff"
      stroke="#d8d8d8"
      strokeWidth="3"
      strokeLinejoin="round"
      paintOrder="stroke"
      fontWeight="700"
      fontFamily="Liberation Sans, sans-serif"
    >
      <text x="2" y="94" fontSize="64">Bai</text>
      <ellipse cx="112" cy="40" rx="11" ry="14" />
      <ellipse cx="132" cy="19" rx="11" ry="15" />
      <ellipse cx="158" cy="21" rx="11" ry="14" />
      <ellipse cx="174" cy="46" rx="11" ry="14" />
      <path d="M142 42c12 0 15 12 26 22 14 12 14 33-6 33-8 0-12-2-20-2s-12 2-20 2c-20 0-20-21-7-33 12-10 15-22 27-22z" />
      <text x="119" y="87" fontSize="38">du</text>
      <text x="188" y="90" fontSize="48" fontFamily="Noto Sans CJK SC, sans-serif">经验</text>
      <text x="2" y="131" fontSize="33" fontWeight="400" fontFamily="Noto Sans, sans-serif">
        jingyan.baidu.com
      </text>
    </g>
  </Watermark>
);

const Document = () => (
  <DocWindow>
    <TabStrip>
      <HomeTab aria-label="主页"><FaHome size={13} /></HomeTab>
      <DocTab>未命名 -1*</DocTab>
      <NewTab aria-label="新建"><Icon name="plus" size={10} /></NewTab>
    </TabStrip>
    <TopRuler>
      {hMarks.map((mark, i) => <HCell key={i}>{mark}</HCell>)}
      <Unit>毫米</Unit>
      <Corner><Icon name="tools" size={9} /></Corner>
      <HCursor />
    </TopRuler>
    <View>
      <SideRuler>
        <SideScale>
          {vMarks.map((mark) => <VCell key={mark}>{mark}</VCell>)}
        </SideScale>
        <VCursor />
      </SideRuler>
      <Canvas>
        <BannerColumn>
          {banners.map((b) => <Banner key={b.text} $size={b.size}><span>{b.text}</span></Banner>)}
        </BannerColumn>
        <BannerColumn>
          {banners.map((b) => <PrintLine key={b.text} $size={b.size}><span>{b.text}</span></PrintLine>)}
        </BannerColumn>
      </Canvas>
      <VScroll>
        <ScrollButton aria-label="向上" $side="bottom" $away="top" />
        <span />
        <VThumb>≡</VThumb>
        <span />
        <ScrollButton aria-label="向下" $side="top" $away="bottom" />
      </VScroll>
      <ExportDialog />
      <Arrow width="352" height="120" viewBox="0 0 352 120">
        <path d="M6 111l18-15 1 5L350 4l1 1L27 107l2 7z" fill="#f23a3c" />
      </Arrow>
      <BaiduMark />
    </View>
    <PageNav>
      <NavButtons>
        <Icon name="page" size={9} />
        <span>|◀</span>
        <span>◀</span>
        <span>1 的 1</span>
        <span>▶</span>
        <span>▶|</span>
        <Icon name="page" size={9} />
      </NavButtons>
      <PageTab><span>页1</span></PageTab>
      <NavFill />
      <ScrollButton aria-label="向左" $side="right" $away="left" />
      <HTrack>
        <TrackGap />
        <HThumb />
        <ScrollButton aria-label="向右" $side="left" $away="right" />
      </HTrack>
      <PlainButton aria-label="导航器"><Icon name="zoomFit" size={14} /></PlainButton>
    </PageNav>
  </DocWindow>
);

const App = () => (
  <Page>
    <GlobalStyle />
    <TitleBar>
      <Icon name="logo" size={13} />
      <Title>CorelDRAW 2019 (64-Bit) - 未命名 -1*</Title>
      <TopEdge />
      <WindowButtons>
        <PlainButton aria-label="用户"><Icon name="user" size={13} /></PlainButton>
        <PlainButton aria-label="最小化"><Icon name="min" size={13} /></PlainButton>
        <PlainButton aria-label="还原"><Icon name="restore" size={12} /></PlainButton>
        <PlainButton aria-label="关闭"><Icon name="close" size={13} /></PlainButton>
      </WindowButtons>
    </TitleBar>
    <MenuBar>
      {menus.map(([name, key]) => (
        <PlainButton key={key}>{name}(<u>{key}</u>)</PlainButton>
      ))}
    </MenuBar>
    <StandardBar />
    <PropertyBar />
    <Body>
      <ToolBox>
        <ToolBoxButton aria-label="pick" $active><Icon name="pick" size={15} /></ToolBoxButton>
        {tools.map((group) => (
          <React.Fragment key={group[0]}>
            {group.map((name) => (
              <ToolBoxButton key={name} aria-label={name} $plain={name === 'checker'}>
                <Icon name={name} size={14} />
              </ToolBoxButton>
            ))}
            <hr />
          </React.Fragment>
        ))}
        <ToolBoxButton aria-label="自定义" $plain $dim><Icon name="plus" size={12} /></ToolBoxButton>
      </ToolBox>
      <Main>
        <PluginBar>
          <PlainButton aria-label="账户"><Icon name="account" size={17} /></PlainButton>
          <Space $w={5} />
          <PluginName>凯美易软件</PluginName>
          <PluginIcons>
            {plugins.map((name) => (
              <PlainButton key={name} aria-label={name}>
                {packIcons[name] || <Icon name={name} size={16} />}
              </PlainButton>
            ))}
          </PluginIcons>
        </PluginBar>
        <Work>
          <Document />
          <Docker>
            <DockerButton aria-label="关闭"><Icon name="close" size={7} /></DockerButton>
            <DockerTab $h={60} $active><Icon name="transform" size={14} />变换</DockerTab>
            <DockerTab $h={64}><Icon name="sliders" size={14} />Color</DockerTab>
            <DockerTab $h={90}><Icon name="step" size={14} />步长和重复</DockerTab>
            <DockerTab $h={74}><Icon name="blend" size={14} />混合(B)</DockerTab>
            <DockerTab $h={62}><Icon name="props" size={14} />属性</DockerTab>
            <DockerButton aria-label="添加"><Icon name="plus" size={11} /></DockerButton>
          </Docker>
        </Work>
        <DocPalette>
          <span>▸</span>
          <Icon name="dropper" size={11} />
          <span>‹</span>
          <NoColor $size={14} />
          <em>将颜色(或对象)拖动至此处，以便将这些颜色与文档存储在一起</em>
          <span>›</span>
          <span>»</span>
        </DocPalette>
      </Main>
      <Palette>
        <PaletteTools $h={54}>
          <span>▸</span>
          <Icon name="dropper" size={11} />
          <span>︿</span>
        </PaletteTools>
        <NoColor $size={15} />
        {colors.map((color) => <Swatch key={color} $color={color} aria-label={color} />)}
        <PaletteTools $h={35}>
          <span>﹀</span>
          <span>»</span>
        </PaletteTools>
      </Palette>
    </Body>
    <StatusBar>
      <Icon name="gear" size={15} />
      <StatusText>单击并拖动可导航图像</StatusText>
      <StatusItem $w={168}>
        <Icon name="fill" size={14} />
        <NoColor $size={17} />
        无
      </StatusItem>
      <StatusItem $w={206}>
        <Icon name="nib" size={13} />
        <Ink />
        C： 0 M： 0 Y： 0 K： 100
      </StatusItem>
      <Sep />
      <Space $w={6} />
      <Icon name="screen" size={14} />
    </StatusBar>
  </Page>
);

export default App;
